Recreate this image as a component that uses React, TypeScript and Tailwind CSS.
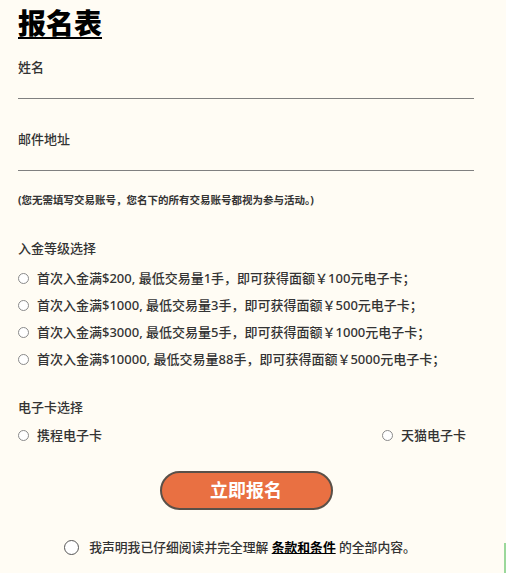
import React from "react";

const tiers = [
  "首次入金满$200, 最低交易量1手，即可获得面额￥100元电子卡；",
  "首次入金满$1000, 最低交易量3手，即可获得面额￥500元电子卡；",
  "首次入金满$3000, 最低交易量5手，即可获得面额￥1000元电子卡；",
  "首次入金满$10000, 最低交易量88手，即可获得面额￥5000元电子卡；",
];

function Radio() {
  return <span className="inline-block h-[11px] w-[11px] shrink-0 rounded-full border border-[#8a8a8a] bg-white" />;
}

export default function App() {
  return (
    <div
      className="relative min-h-[573px] w-full overflow-hidden bg-[#fffcf4] text-[#333]"
      style={{ fontFamily: '"Noto Sans", "Noto Sans CJK SC", sans-serif' }}
    >
      <div className="w-[474px] pl-[18px] pt-[4px]">
        <h1 className="text-[28px] font-black leading-[38px] text-black underline decoration-[2px] underline-offset-[3px]">
          报名表
        </h1>

        <div className="mt-[16px]">
          <label className="block text-[13px] font-medium leading-[18px]">姓名</label>
          <div className="h-[23px] border-b-[1.5px] border-[#808080]" />
        </div>

        <div className="mt-[31px]">
          <label className="block text-[13px] font-medium leading-[18px]">邮件地址</label>
          <div className="h-[23px] border-b-[1.5px] border-[#808080]" />
        </div>

        <p className="mt-[22px] text-[10.5px] font-bold leading-[14px] text-[#333]">
          (您无需填写交易账号，您名下的所有交易账号都视为参与活动。)
        </p>

        <div className="mt-[32px]">
          <h2 className="text-[13px] font-medium leading-[18px]">入金等级选择</h2>
          <ul className="mt-[12px] flex flex-col gap-[9px]">
            {tiers.map((t) => (
              <li key={t} className="flex items-center gap-[8px] text-[13px] font-medium leading-[18px]">
                <Radio />
                <span>{t}</span>
              </li>
            ))}
          </ul>
        </div>

        <div className="mt-[30px]">
          <h2 className="text-[13px] font-medium leading-[18px]">电子卡选择</h2>
          <div className="mt-[10px] flex items-center text-[13px] font-medium leading-[18px]">
            <div className="flex w-[364px] items-center gap-[8px]">
              <Radio />
              <span>携程电子卡</span>
            </div>
            <div className="flex items-center gap-[8px]">
              <Radio />
              <span>天猫电子卡</span>
            </div>
          </div>
        </div>

        <div className="mt-[27px] flex justify-center">
          <button className="h-[39px] w-[173px] rounded-full border-2 border-[#5a5048] bg-[#e97042] text-[18px] font-bold text-white">
            立即报名
          </button>
        </div>

        <div className="mt-[28px] flex items-center justify-center gap-[10px] pr-[12px] text-[12.8px] font-medium leading-[18px]">
          <span className="inline-block h-[15px] w-[15px] rounded-full border-[1.5px] border-[#555] bg-white" />
          <span>
            我声明我已仔细阅读并完全理解{" "}
            <span className="font-bold text-black underline">条款和条件</span> 的全部内容。
          </span>
        </div>
      </div>
      <div className="absolute bottom-0 right-0 h-[30px] w-[2px] bg-[#9bd89b]" />
    </div>
  );
}
